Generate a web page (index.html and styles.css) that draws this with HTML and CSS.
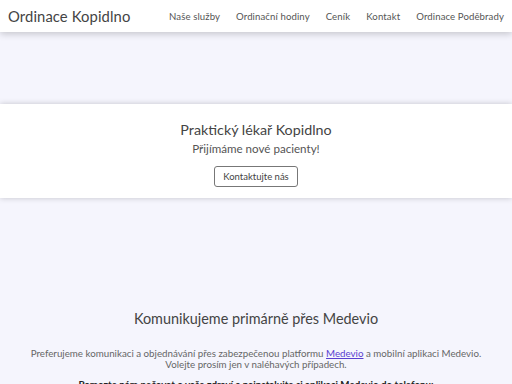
FILE: index.html
```html
<!DOCTYPE html>
<html lang="cs">
<head>
<meta charset="utf-8">
<title>Ordinace Kopidlno</title>
<link rel="stylesheet" href="styles.css">
</head>
<body>
<header class="navbar">
  <a class="brand" href="#">Ordinace Kopidlno</a>
  <nav class="nav">
    <a href="#">Naše služby</a>
    <a href="#">Ordinační hodiny</a>
    <a href="#">Ceník</a>
    <a href="#">Kontakt</a>
    <a href="#">Ordinace Poděbrady</a>
  </nav>
</header>
<main>
  <div class="spacer"></div>
  <section class="hero">
    <h1>Praktický lékař Kopidlno</h1>
    <p class="sub">Přijímáme nové pacienty!</p>
    <a class="btn" href="#">Kontaktujte nás</a>
  </section>
  <section class="info">
    <h2>Komunikujeme primárně přes Medevio</h2>
    <p class="lead">Preferujeme komunikaci a objednávání přes zabezpečenou platformu <a href="#">Medevio</a> a mobilní aplikaci Medevio.<br>Volejte prosím jen v naléhavých případech.</p>
    <p class="strong">Pomozte nám pečovat o vaše zdraví a nainstalujte si aplikaci Medevio do telefonu:</p>
  </section>
</main>
</body>
</html>
```
FILE: styles.css
```css
html, body {
  margin: 0;
  padding: 0;
}
body {
  background: #f5f5fd;
  font-family: "Lato", "Noto Sans", sans-serif;
  color: #555;
  overflow: hidden;
  height: 384px;
}
a { text-decoration: none; color: inherit; }
.navbar {
  background: #fff;
  height: 32px;
  display: flex;
  align-items: center;
  padding: 0 8px;
  box-shadow: 0 2px 7px rgba(0,0,0,0.2);
  position: relative;
  z-index: 2;
}
.brand {
  font-size: 14.8px;
  color: #444;
  letter-spacing: 0.1px;
}
.nav {
  margin-left: auto;
  display: flex;
  gap: 16px;
  font-size: 9.6px;
  color: #555;
  letter-spacing: 0.1px;
}
.spacer { height: 72px; }
.hero {
  background: #fff;
  height: 94px;
  box-shadow: 0 0 6px rgba(0,0,0,0.2);
  display: flex;
  flex-direction: column;
  align-items: center;
  padding-top: 17px;
  box-sizing: border-box;
}
.hero h1 {
  margin: 0;
  font-weight: 400;
  font-size: 14.3px;
  color: #444;
  line-height: 18px;
}
.hero .sub {
  margin: 2px 0 0;
  font-size: 11.6px;
  line-height: 16px;
  color: #555;
}
.btn {
  margin-top: 9px;
  border: 1px solid #777;
  border-radius: 3px;
  font-size: 9.5px;
  line-height: 19px;
  padding: 0 8px;
  color: #444;
}
.info {
  text-align: center;
  padding-top: 112px;
}
.info h2 {
  margin: 0;
  font-weight: 400;
  font-size: 14.4px;
  line-height: 18px;
  color: #444;
}
.lead {
  margin: 20px 0 0;
  font-size: 9.75px;
  line-height: 11px;
  color: #666;
}
.lead a { color: #5a3fd0; text-decoration: underline; }
.strong {
  margin: 8px 0 0;
  font-size: 9.8px;
  font-weight: 700;
  color: #222;
}
```
